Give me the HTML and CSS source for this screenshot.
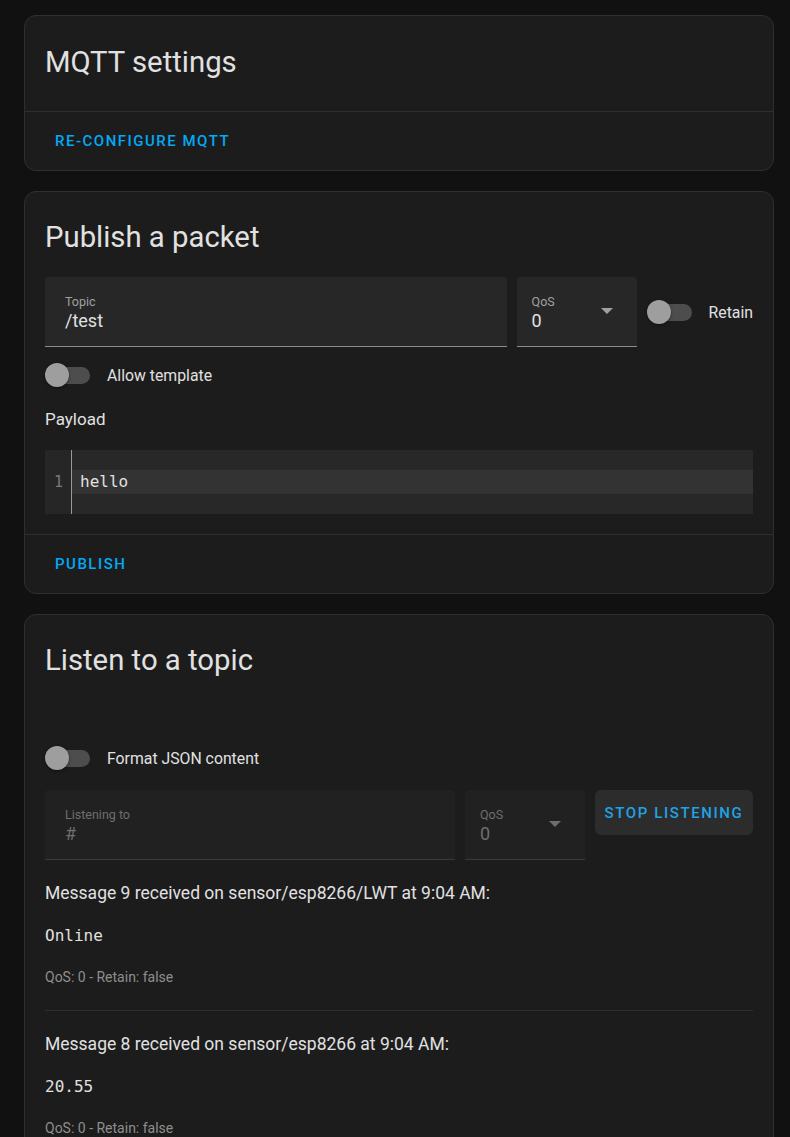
FILE: index.html
```html
<!DOCTYPE html>
<html lang="en">
<head>
<meta charset="utf-8">
<title>MQTT</title>
<link rel="stylesheet" href="styles.css">
</head>
<body>
<div class="page">
  <section class="card">
    <h1 class="card-header card-header--solo">MQTT settings</h1>
    <div class="card-actions">
      <button class="text-btn">Re-configure MQTT</button>
    </div>
  </section>

  <section class="card">
    <h1 class="card-header">Publish a packet</h1>
    <div class="card-content">
      <div class="field-row">
        <div class="field field--grow">
          <span class="field-label">Topic</span>
          <span class="field-value">/test</span>
        </div>
        <div class="field field--select">
          <span class="field-label">QoS</span>
          <span class="field-value">0</span>
          <span class="select-arrow"></span>
        </div>
        <label class="switch-row">
          <span class="switch"><span class="switch-track"></span><span class="switch-knob"></span></span>
          <span class="switch-label">Retain</span>
        </label>
      </div>
      <label class="switch-row switch-row--block">
        <span class="switch"><span class="switch-track"></span><span class="switch-knob"></span></span>
        <span class="switch-label">Allow template</span>
      </label>
      <p class="section-label">Payload</p>
      <div class="editor">
        <div class="gutter"><span class="line-no">1</span></div>
        <div class="code">
          <div class="code-line code-line--active">hello</div>
        </div>
      </div>
    </div>
    <div class="card-actions">
      <button class="text-btn">Publish</button>
    </div>
  </section>

  <section class="card">
    <h1 class="card-header">Listen to a topic</h1>
    <div class="card-content">
      <label class="switch-row switch-row--block switch-row--json">
        <span class="switch"><span class="switch-track"></span><span class="switch-knob"></span></span>
        <span class="switch-label">Format JSON content</span>
      </label>
      <div class="field-row field-row--listen">
        <div class="field field--grow field--disabled">
          <span class="field-label">Listening to</span>
          <span class="field-value">#</span>
        </div>
        <div class="field field--select field--disabled">
          <span class="field-label">QoS</span>
          <span class="field-value">0</span>
          <span class="select-arrow"></span>
        </div>
        <button class="tonal-btn">Stop listening</button>
      </div>
      <div class="message">
        <p class="message-title">Message 9 received on sensor/esp8266/LWT at 9:04 AM:</p>
        <pre class="message-payload">Online</pre>
        <p class="message-meta">QoS: 0 - Retain: false</p>
      </div>
      <div class="message">
        <p class="message-title">Message 8 received on sensor/esp8266 at 9:04 AM:</p>
        <pre class="message-payload">20.55</pre>
        <p class="message-meta">QoS: 0 - Retain: false</p>
      </div>
    </div>
  </section>
</div>
</body>
</html>
```

FILE: styles.css
```css
* { box-sizing: border-box; }
html, body { margin: 0; padding: 0; }
body {
  background: #111111;
  color: #e1e1e1;
  font-family: Roboto, "Liberation Sans", sans-serif;
  height: 1137px;
  overflow: hidden;
}
.page {
  display: flex;
  flex-direction: column;
  gap: 20px;
  padding: 15px 16px 20px 24px;
}
.card {
  background: #1c1c1c;
  border: 1px solid #2f2f2f;
  border-radius: 12px;
}
.card-header {
  margin: 0;
  font-weight: 400;
  font-size: 29.3px;
  line-height: 40px;
  padding: 25px 20px 0;
  color: #e1e1e1;
}
.card-header--solo { padding-top: 26px; padding-bottom: 29px; }
.card-actions {
  border-top: 1px solid #2f2f2f;
  height: 59px;
  display: flex;
  align-items: center;
  padding: 0 8px;
}
.text-btn {
  background: none;
  border: 0;
  height: 36px;
  padding: 0 22px;
  font-family: Roboto, "Liberation Sans", sans-serif;
  font-weight: 500;
  font-size: 15px;
  letter-spacing: 1.5px;
  text-transform: uppercase;
  color: #03a9f4;
}
.card-content {
  padding: 20px 20px 20px;
}
.field-row {
  display: flex;
  gap: 10px;
  align-items: center;
}
.field-row--listen { align-items: flex-start; margin-top: 18px; }
.field {
  position: relative;
  height: 70px;
  background: #272727;
  border-bottom: 1px solid #8c8c8c;
  border-radius: 4px 4px 0 0;
  padding: 17px 20px 0;
  display: flex;
  flex-direction: column;
}
.field--grow { flex: 1; }
.field--select { width: 120px; padding-left: 15px; }
.field-label {
  font-size: 12.5px;
  line-height: 15px;
  color: #a0a0a0;
}
.field-value {
  font-size: 18px;
  line-height: 24px;
  color: #e1e1e1;
}
.field--disabled {
  background: #212121;
  border-bottom-color: #3a3a3a;
}
.field--disabled .field-label,
.field--disabled .field-value { color: #6e6e6e; }
.select-arrow {
  position: absolute;
  right: 24px;
  top: 31px;
  width: 0; height: 0;
  border-left: 6px solid transparent;
  border-right: 6px solid transparent;
  border-top: 6px solid #a0a0a0;
}
.field--disabled .select-arrow { border-top-color: #6e6e6e; }

.switch-row {
  display: flex;
  align-items: center;
  gap: 17px;
  height: 28px;
}
.switch-row--block { margin-top: 14px; }
.switch-row--json { margin-top: 44px; }
.switch {
  position: relative;
  width: 45px;
  height: 24px;
  flex: none;
}
.switch-track {
  position: absolute;
  left: 2px;
  top: 4px;
  width: 43px;
  height: 17px;
  border-radius: 9px;
  background: #4d4d4d;
}
.switch-knob {
  position: absolute;
  left: 0;
  top: 0;
  width: 24px;
  height: 24px;
  border-radius: 50%;
  background: #9e9e9e;
  box-shadow: 0 1px 3px rgba(0,0,0,0.5);
}
.switch-label {
  font-size: 15.8px;
  color: #e1e1e1;
}
.section-label {
  margin: 18px 0 0;
  font-size: 17px;
  line-height: 24px;
  color: #e1e1e1;
}
.editor {
  margin-top: 19px;
  display: flex;
  height: 64px;
  background: #282828;
}
.gutter {
  width: 27px;
  flex: none;
  background: #262626;
  border-right: 1px solid #9a9a9a;
  display: flex;
  align-items: center;
  justify-content: flex-end;
  padding-right: 8px;
}
.line-no {
  font-family: "DejaVu Sans Mono", monospace;
  font-size: 15px;
  line-height: 24px;
  color: #7a7a7a;
}
.code {
  flex: 1;
  display: flex;
  flex-direction: column;
  justify-content: center;
}
.code-line {
  font-family: "DejaVu Sans Mono", monospace;
  font-size: 16px;
  line-height: 24px;
  padding-left: 8px;
  color: #e1e1e1;
}
.code-line--active { background: #333333; }

.tonal-btn {
  flex: none;
  width: 158px;
  height: 45px;
  border: 0;
  border-radius: 6px;
  background: #2c2c2c;
  color: #1ea3e6;
  font-family: Roboto, "Liberation Sans", sans-serif;
  font-weight: 500;
  font-size: 15px;
  letter-spacing: 1.6px;
  text-transform: uppercase;
}
.message {
  padding-top: 21px;
  padding-bottom: 23px;
  border-bottom: 1px solid #2f2f2f;
}
.message:last-child { border-bottom: 0; }
.message-title {
  margin: 0;
  font-size: 17.5px;
  line-height: 24px;
  color: #e1e1e1;
}
.message-payload {
  margin: 19px 0 0;
  font-family: "DejaVu Sans Mono", monospace;
  font-size: 16px;
  line-height: 24px;
  color: #e1e1e1;
}
.message-meta {
  margin: 19px 0 0;
  font-size: 14px;
  line-height: 20px;
  color: #8e8e8e;
}
```
